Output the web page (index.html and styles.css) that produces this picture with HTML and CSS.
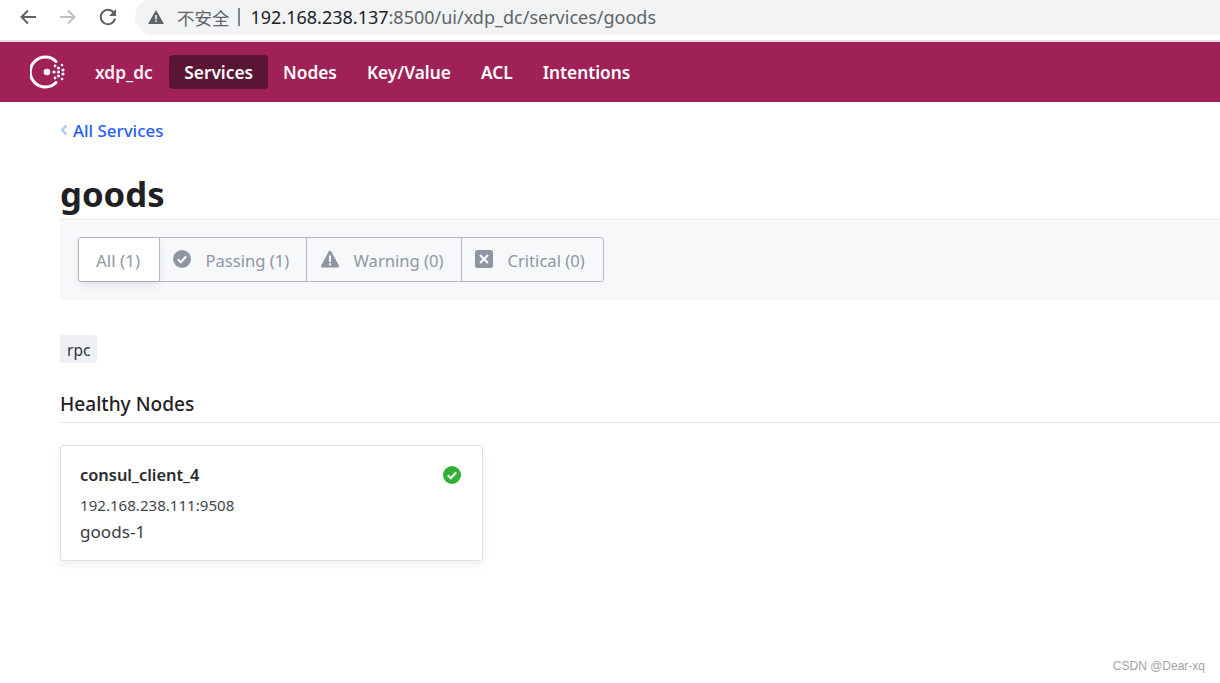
FILE: index.html
```html
<!DOCTYPE html>
<html lang="en">
<head>
<meta charset="utf-8">
<title>goods</title>
<link rel="stylesheet" href="styles.css">
</head>
<body>
<div class="chrome">
  <svg class="tb-icon" width="20" height="20" viewBox="0 0 20 20"><path d="M18 10H4M10 3.500 3.500 10l6.500 6.500" fill="none" stroke="#5f6368" stroke-width="2"/></svg>
  <svg class="tb-icon" width="20" height="20" viewBox="0 0 20 20"><path d="M2 10h14M10 3.500l6.500 6.500-6.500 6.500" fill="none" stroke="#bdc1c6" stroke-width="2"/></svg>
  <svg class="tb-icon" width="20" height="20" viewBox="0 0 20 20"><path d="M16.500 7A7.200 7.200 0 1 0 17 11.500" fill="none" stroke="#5f6368" stroke-width="2"/><path d="M18 2v7h-7z" fill="#5f6368"/></svg>
  <div class="omnibox">
    <svg class="warn" width="16" height="14" viewBox="0 0 16 14"><path d="M8 0 16 14H0z" fill="#5f6368"/><path d="M7.200 5h1.600v4.500H7.200zM7.200 10.500h1.600V12H7.200z" fill="#f1f3f4"/></svg>
    <span class="insecure">不安全</span><span class="sep"></span>
    <span class="url"><span class="host">192.168.238.137</span>:8500/ui/xdp_dc/services/goods</span>
  </div>
</div>
<header class="nav">
  <svg class="logo" width="36" height="36" viewBox="0 0 36 36">
    <path d="M26 7.500A15 15 0 1 0 26 28.500" fill="none" stroke="#fff" stroke-width="3" stroke-linecap="round"/>
    <circle cx="17" cy="18" r="3.300" fill="#fff"/>
    <g fill="#fff"><circle cx="24" cy="18" r="1.600"/><circle cx="28.500" cy="14" r="1.600"/><circle cx="28.500" cy="18" r="1.600"/><circle cx="28.500" cy="22" r="1.600"/><circle cx="33" cy="16" r="1.600"/><circle cx="33" cy="20" r="1.600"/><circle cx="25" cy="12" r="1.400"/><circle cx="25" cy="24" r="1.400"/><circle cx="32" cy="11" r="1.300"/><circle cx="32" cy="25" r="1.300"/></g>
  </svg>
  <nav class="nav-items">
    <a class="nav-item dc">xdp_dc</a>
    <a class="nav-item active">Services</a>
    <a class="nav-item">Nodes</a>
    <a class="nav-item">Key/Value</a>
    <a class="nav-item">ACL</a>
    <a class="nav-item">Intentions</a>
  </nav>
</header>
<main class="content">
  <div class="crumb"><svg width="8" height="12" viewBox="0 0 8 12"><path d="M6.500 1.500 2 6l4.500 4.500" fill="none" stroke="#a3c4fb" stroke-width="2"/></svg><a>All Services</a></div>
  <h1 class="title">goods</h1>
  <div class="filter-bar">
    <div class="tabs">
      <div class="tab selected"><span>All (1)</span></div>
      <div class="tab">
        <svg width="18" height="18" viewBox="0 0 18 18"><circle cx="9" cy="9" r="9" fill="#8f96a3"/><path d="M4.800 9.300 7.800 12.200 13.200 6.300" fill="none" stroke="#f7f8fa" stroke-width="2"/></svg>
        <span>Passing (1)</span>
      </div>
      <div class="tab tab-warning">
        <svg width="18" height="18" viewBox="0 0 18 18"><path d="M7.700 1.500Q9 -.3 10.300 1.500L17.600 15Q18.500 17.500 16.500 17.500H1.500Q-.5 17.500 .4 15z" fill="#8f96a3"/><path d="M8 5.500h2v6.500H8zM8 13.300h2v2.200H8z" fill="#f7f8fa"/></svg>
        <span>Warning (0)</span>
      </div>
      <div class="tab">
        <svg width="18" height="18" viewBox="0 0 18 18"><rect width="18" height="18" rx="2.500" fill="#8f96a3"/><path d="M5 5l8 8M13 5l-8 8" fill="none" stroke="#f7f8fa" stroke-width="2.200"/></svg>
        <span>Critical (0)</span>
      </div>
    </div>
  </div>
  <div class="tag-row"><span class="tag">rpc</span></div>
  <h2 class="section">Healthy Nodes</h2>
  <article class="card">
    <div class="card-head">
      <span class="card-name">consul_client_4</span>
      <svg width="18" height="18" viewBox="0 0 18 18"><circle cx="9" cy="9" r="9" fill="#2eb039"/><path d="M4.800 9.300 7.800 12.200 13.200 6.300" fill="none" stroke="#fff" stroke-width="2"/></svg>
    </div>
    <div class="card-addr">192.168.238.111:9508</div>
    <div class="card-id">goods-1</div>
  </article>
</main>
<div class="watermark">CSDN @Dear-xq</div>
</body>
</html>
```
FILE: styles.css
```css
* { box-sizing: border-box; }
html, body { margin: 0; height: 100%; overflow: hidden; background: #fff; }
body { font-family: "Noto Sans", "Noto Sans CJK SC", sans-serif; position: relative; }

.chrome { height: 42px; display: flex; align-items: center; padding: 0 0 6px 18px; border-bottom: 2px solid #dfe1e3; background: #fff; }
.tb-icon { margin-right: 20px; flex: none; }
.tb-icon:nth-child(3) { margin-right: 17px; }
.omnibox { flex: 1; height: 36px; background: #f1f3f4; border-radius: 18px 0 0 18px; display: flex; align-items: center; padding-left: 13px; font-size: 18px; color: #5f6368; white-space: nowrap; }
.warn { margin-right: 13px; }
.insecure { font-size: 17.500px; }
.sep { width: 2px; height: 18px; background: #80868b; margin: 0 11px 0 8px; }
.host { color: #202124; }

.nav { height: 60px; background: #a02157; display: flex; align-items: center; padding-left: 30px; }
.logo { flex: none; }
.nav-items { display: flex; align-items: center; margin-left: 22px; }
.nav-item { height: 34px; line-height: 36px; padding: 0 15px; border-radius: 4px; font-size: 17.300px; font-weight: 600; color: #fff; }
.nav-item.dc { padding: 0 16.500px 0 7px; color: #fbeef4; }
.nav-item.active { background: #5a1434; }

.content { padding-left: 60px; }
.crumb { height: 58px; display: flex; align-items: center; gap: 5px; font-size: 16.900px; font-weight: 500; color: #1f5eff; padding-bottom: 2px; }
.title { margin: 0; height: 59px; padding-top: 8px; line-height: 52px; font-size: 34.700px; font-weight: 700; color: #1f2024; }
.filter-bar { height: 81px; background: #f7f8fa; border-top: 1px solid #e8eaee; padding: 17px 0 0 18px; }
.tabs { display: inline-grid; grid-template-columns: 80px 147px 155px 142px; height: 45px; border: 1px solid #b4b8c6; border-radius: 3px; }
.tab { display: flex; align-items: center; gap: 14.500px; padding-left: 13px; font-size: 16.600px; color: #8f96a3; border-left: 1px solid #b4b8c6; white-space: nowrap; }
.tab:first-child { border-left: 0; }
.tab span { padding-top: 2px; }
.tab svg { margin-top: -2px; }
.tab.tab-warning { padding-left: 14px; }
.tab.selected { background: #fff; padding-left: 17px; font-size: 17px; border-radius: 3px 0 0 3px; box-shadow: 0 4px 8px rgba(31, 32, 36, .1); }

.tag-row { padding-top: 35px; height: 77px; }
.tag { display: inline-block; height: 28px; line-height: 30px; padding: 0 7px; background: #eef0f5; border-radius: 2px; font-size: 15.500px; color: #31323a; }
.section { margin: 0; height: 46px; padding-top: 13px; line-height: 28px; font-size: 19.100px; font-weight: 500; color: #1f2024; border-bottom: 1px solid #e8eaee; }
.card { width: 423px; height: 116px; margin-top: 22px; padding: 15px 19px 0; border: 1px solid #dcdde6; border-radius: 3px; box-shadow: 0 4px 8px rgba(31, 32, 36, .07); }
.card-head { display: flex; justify-content: space-between; align-items: center; height: 26px; padding-right: 2px; }
.card-head svg { margin-top: 2px; }
.card-name { font-size: 16.400px; font-weight: 600; color: #2a2b31; }
.card-addr { margin-top: 5px; height: 26px; line-height: 26px; font-size: 15.100px; color: #45464d; }
.card-id { margin-top: 1px; height: 26px; line-height: 26px; font-size: 17.100px; color: #3a3b42; }

.watermark { position: absolute; right: 15px; top: 659px; font-family: "Liberation Sans", sans-serif; font-size: 12px; color: #a3a3a3; }
```
